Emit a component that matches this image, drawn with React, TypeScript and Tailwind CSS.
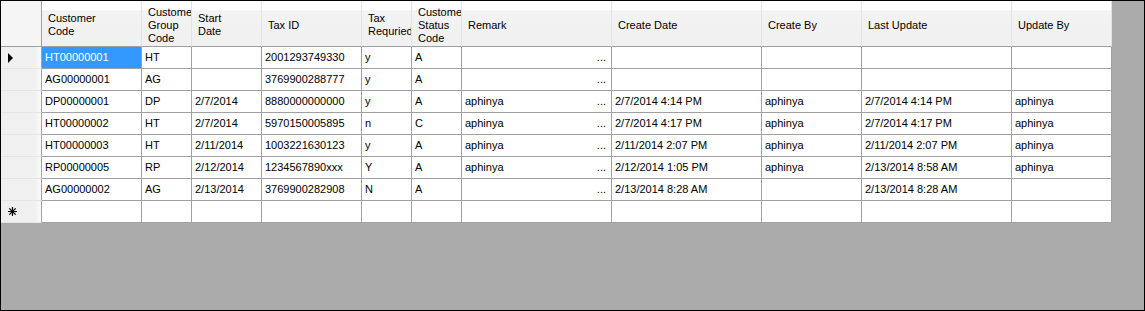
import type { ReactNode } from 'react'

// ── Column setup ────────────────────────────────────────────────────────────
type Col = { w: string; head: string[] }

const columns: Col[] = [
  { w: 'w-[100px]', head: ['Customer', 'Code'] },
  { w: 'w-[50px]', head: ['Custome', 'Group', 'Code'] },
  { w: 'w-[70px]', head: ['Start', 'Date'] },
  { w: 'w-[100px]', head: ['Tax ID'] },
  { w: 'w-[50px]', head: ['Tax', 'Requried'] },
  { w: 'w-[50px]', head: ['Custome', 'Status', 'Code'] },
  { w: 'w-[150px]', head: ['Remark'] },
  { w: 'w-[150px]', head: ['Create Date'] },
  { w: 'w-[100px]', head: ['Create By'] },
  { w: 'w-[150px]', head: ['Last Update'] },
  { w: 'w-[100px]', head: ['Update By'] },
]

const REMARK = 6

const rows: string[][] = [
  ['HT00000001', 'HT', '', '2001293749330', 'y', 'A', '', '', '', '', ''],
  ['AG00000001', 'AG', '', '3769900288777', 'y', 'A', '', '', '', '', ''],
  ['DP00000001', 'DP', '2/7/2014', '8880000000000', 'y', 'A', 'aphinya', '2/7/2014 4:14 PM', 'aphinya', '2/7/2014 4:14 PM', 'aphinya'],
  ['HT00000002', 'HT', '2/7/2014', '5970150005895', 'n', 'C', 'aphinya', '2/7/2014 4:17 PM', 'aphinya', '2/7/2014 4:17 PM', 'aphinya'],
  ['HT00000003', 'HT', '2/11/2014', '1003221630123', 'y', 'A', 'aphinya', '2/11/2014 2:07 PM', 'aphinya', '2/11/2014 2:07 PM', 'aphinya'],
  ['RP00000005', 'RP', '2/12/2014', '1234567890xxx', 'Y', 'A', 'aphinya', '2/12/2014 1:05 PM', 'aphinya', '2/13/2014 8:58 AM', 'aphinya'],
  ['AG00000002', 'AG', '2/13/2014', '3769900282908', 'N', 'A', '', '2/13/2014 8:28 AM', '', '2/13/2014 8:28 AM', ''],
]

// ── Row header glyphs ───────────────────────────────────────────────────────
function CurrentArrow() {
  return (
    <svg width="6" height="10" viewBox="0 0 6 10" aria-hidden="true">
      <path d="M0 0L5 5L0 10Z" fill="#000" />
    </svg>
  )
}

function NewRowStar() {
  return (
    <svg width="9" height="9" viewBox="0 0 9 9" aria-hidden="true">
      <path d="M4.5 0V9M0 4.5H9M1.3 1.3L7.7 7.7M7.7 1.3L1.3 7.7" stroke="#000" strokeWidth="1.2" />
    </svg>
  )
}

function RowHeader({ children }: { children?: ReactNode }) {
  return (
    <div className="flex h-[22px] w-[41px] shrink-0 items-center border-b border-r border-b-[#e4e4e4] border-r-[#a0a0a0] bg-[linear-gradient(to_right,#f0f0f0_85%,#fbfbfb)] pl-[7px]">
      {children}
    </div>
  )
}

// ── Grid ────────────────────────────────────────────────────────────────────
export default function App() {
  return (
    <div className="flex h-[311px] w-[1145px] flex-col border border-black bg-[#ababab] font-['Liberation_Sans',Arial,sans-serif] text-[11px] text-black">
      {/* Column headers */}
      <div className="flex h-[46px] shrink-0">
        <div className="h-full w-[41px] shrink-0 border-b border-r border-b-[#a0a0a0] border-r-[#a0a0a0] bg-[#f5f5f5]" />
        {columns.map((c, i) => (
          <div
            key={i}
            className={`${c.w} flex h-full shrink-0 flex-col justify-center overflow-hidden border-b border-r border-b-[#a0a0a0] border-r-[#e2e2e2] bg-[linear-gradient(#ffffff_0,#ffffff_20%,#f3f3f3_22%,#f0f0f0_100%)] pt-[3px] pl-[6px] leading-[13px] whitespace-nowrap`}
          >
            {c.head.map((line, j) => (
              <span key={j}>{line}</span>
            ))}
          </div>
        ))}
      </div>

      {/* Data rows */}
      {rows.map((r, ri) => (
        <div key={ri} className="flex h-[22px] shrink-0">
          <RowHeader>{ri === 0 && <CurrentArrow />}</RowHeader>
          {r.map((v, ci) => {
            const selected = ri === 0 && ci === 0
            return (
              <div
                key={ci}
                className={`${columns[ci].w} flex h-full shrink-0 items-center justify-between overflow-hidden border-b border-r border-[#a0a0a0] pl-[3px] whitespace-nowrap ${selected ? 'bg-[#3399ff] text-white' : 'bg-white'}`}
              >
                <span>{v}</span>
                {ci === REMARK && <span className="pr-[5px]">...</span>}
              </div>
            )
          })}
        </div>
      ))}

      {/* New row */}
      <div className="flex h-[22px] shrink-0">
        <RowHeader>
          <NewRowStar />
        </RowHeader>
        {columns.map((c, i) => (
          <div key={i} className={`${c.w} h-full shrink-0 border-b border-r border-[#a0a0a0] bg-white`} />
        ))}
      </div>
    </div>
  )
}
